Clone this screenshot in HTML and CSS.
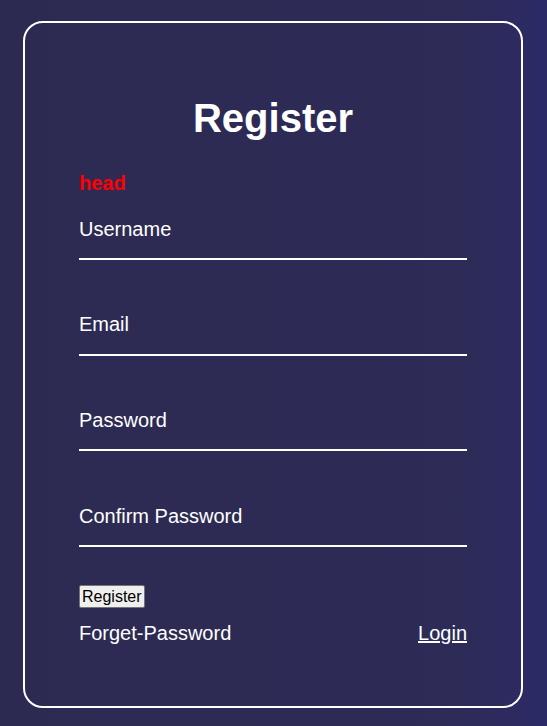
FILE: index.html
```html
<!DOCTYPE html>
<html lang="en">
<head>
<meta charset="utf-8">
<title>Register</title>
<link rel="stylesheet" href="styles.css">
</head>
<body>
<div class="page">
  <form class="card">
    <h1 class="title">Register</h1>
    <div class="head">head</div>
    <div class="fields">
      <input class="field" type="text" placeholder="Username">
      <input class="field" type="email" placeholder="Email">
      <input class="field" type="password" placeholder="Password">
      <input class="field" type="password" placeholder="Confirm Password">
    </div>
    <button class="submit" type="button">Register</button>
    <div class="links">
      <span class="forget">Forget-Password</span>
      <a class="login" href="#">Login</a>
    </div>
  </form>
</div>
</body>
</html>
```

FILE: styles.css
```css
html, body {
  margin: 0;
  padding: 0;
}

body {
  min-height: 726px;
  background: linear-gradient(to right, #2d2a52 0%, #2d2b57 85%, #2c2a66 100%);
  font-family: "Liberation Sans", Arial, sans-serif;
  color: #ffffff;
}

.page {
  display: flex;
  justify-content: center;
  padding-top: 21px;
  padding-right: 1px;
}

.card {
  box-sizing: border-box;
  width: 500px;
  border: 2px solid #ffffff;
  border-radius: 20px;
  padding: 72px 54px 61px 54px;
  display: flex;
  flex-direction: column;
}

.title {
  margin: 0;
  font-size: 40px;
  line-height: 46px;
  font-weight: bold;
  text-align: center;
  color: #ffffff;
}

.head {
  margin-top: 31px;
  font-size: 20px;
  line-height: 23px;
  font-weight: bold;
  color: #ff0000;
}

.fields {
  margin-top: 5px;
  display: flex;
  flex-direction: column;
  gap: 35.7px;
}

.field {
  box-sizing: content-box;
  display: block;
  width: 388px;
  height: 58px;
  margin: 0;
  padding: 0;
  border: none;
  border-bottom: 2px solid #ffffff;
  background: transparent;
  outline: none;
  font-family: "Liberation Sans", Arial, sans-serif;
  font-size: 20px;
  color: #ffffff;
}

.field::placeholder {
  color: #ffffff;
  opacity: 1;
}

.submit {
  align-self: flex-start;
  margin-top: 37.6px;
  padding: 1px 2px;
  border: 1px solid #767676;
  border-radius: 2px;
  background: #efefef;
  color: #000000;
  font-family: "Liberation Sans", Arial, sans-serif;
  font-size: 16px;
  line-height: 19.6px;
}

.links {
  margin-top: 13.3px;
  display: flex;
  justify-content: space-between;
  font-size: 20px;
  line-height: 23px;
}

.forget {
  color: #ffffff;
}

.login {
  color: #ffffff;
  text-decoration: underline;
}
```
